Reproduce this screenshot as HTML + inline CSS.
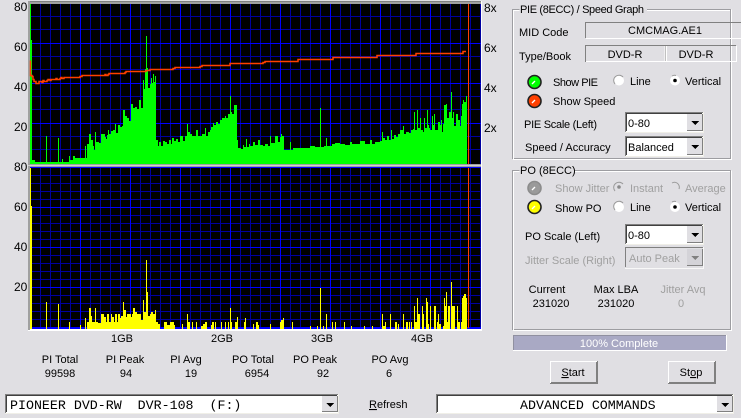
<!DOCTYPE html>
<html><head><meta charset="utf-8"><style>
html,body{margin:0;padding:0;width:741px;height:418px;overflow:hidden;background:#E0DFE3}
svg{display:block}
text{font-family:"Liberation Sans",sans-serif;font-size:11px;fill:#000}
.m{text-anchor:middle}
.g{fill:#a0a0a0}
.w{fill:#fff}
.c{font-family:"Liberation Mono",monospace;font-size:13.3px;white-space:pre}
.a{font-size:12px}
</style></head><body>
<svg width="741" height="418" viewBox="0 0 741 418" xmlns="http://www.w3.org/2000/svg">
<defs>
<pattern id="v" x="30" y="0" width="10" height="418" patternUnits="userSpaceOnUse"><rect x="0" width="1" height="418" fill="#0000a0"/></pattern>
</defs>
<rect width="741" height="418" fill="#E0DFE3"/>
<g shape-rendering="crispEdges">
<rect x="28" y="1" width="454" height="330" fill="#fff"/>
<rect x="28" y="1" width="453" height="3" fill="#a0a0a0"/>
<rect x="28" y="1" width="453" height="1" fill="#808080"/>
<rect x="28" y="1" width="2" height="329" fill="#a0a0a0"/>
<rect x="30" y="4" width="451" height="160" fill="#000"/>
<rect x="30" y="168" width="451" height="161" fill="#000"/>
<rect x="30" y="4" width="451" height="160" fill="url(#v)"/>
<rect x="30" y="168" width="451" height="161" fill="url(#v)"/>
<path fill="#0000a0" d="M30 16h451v1H30zM30 29h451v1H30zM30 56h451v1H30zM30 69h451v1H30zM30 96h451v1H30zM30 109h451v1H30zM30 136h451v1H30zM30 149h451v1H30zM30 175h451v1H30zM30 183h451v1H30zM30 191h451v1H30zM30 199h451v1H30zM30 215h451v1H30zM30 223h451v1H30zM30 231h451v1H30zM30 239h451v1H30zM30 255h451v1H30zM30 263h451v1H30zM30 271h451v1H30zM30 279h451v1H30zM30 295h451v1H30zM30 303h451v1H30zM30 311h451v1H30zM30 319h451v1H30z"/>
<path fill="#0000ff" d="M30 43h451v1H30zM30 83h451v1H30zM30 123h451v1H30zM30 207h451v1H30zM30 247h451v1H30zM30 287h451v1H30zM30 167h451v1H30zM30 327h451v2H30zM80 4h1v160h-1zM130 4h1v160h-1zM180 4h1v160h-1zM230 4h1v160h-1zM280 4h1v160h-1zM330 4h1v160h-1zM380 4h1v160h-1zM430 4h1v160h-1zM80 168h1v160h-1zM130 168h1v160h-1zM180 168h1v160h-1zM230 168h1v160h-1zM280 168h1v160h-1zM330 168h1v160h-1zM380 168h1v160h-1zM430 168h1v160h-1z"/>
<rect x="28" y="164" width="453" height="3" fill="#a0a0a0"/>
<rect x="28" y="165" width="453" height="1" fill="#d0d0d0"/>
<path fill="#00ff00" d="M30 164V4H31V40H32V160H35V162H46V136H47V162H58V138H59V162H62V159H63V162H69V156H70V160H73V156H75V158H85V146H86V158H87V144H89V134H91V140H93V146H94V150H95V132H96V142H99V143H101V134H105V137H106V139H107V135H108V130H109V134H111V131H113V130H115V124H116V133H118V125H120V127H122V126H123V110H125V116H127V118H129V121H131V104H133V108H135V107H137V109H139V100H141V108H143V80H144V89H145V69H146V36H147V68H148V88H150V84H151V78H152V83H153V74H154V82H155V76H156V140H158V146H159V142H161V146H163V141H165V142H167V144H169V140H171V144H172V138H174V141H176V139H178V142H180V136H183V141H185V136H187V124H188V132H190V134H192V136H196V130H198V136H202V134H205V128H206V136H208V132H210V130H211V127H213V123H214V125H216V122H218V124H220V120H222V118H225V116H226V118H228V114H230V96H231V112H232V114H234V105H237V140H238V148H241V149H243V145H244V147H246V139H247V147H249V144H250V146H253V142H255V145H258V140H260V145H263V146H265V144H268V146H270V136H271V143H275V136H278V142H280V137H281V134H282V136H284V150H290V142H291V150H293V148H310V146H315V147H320V108H321V147H324V146H326V138H327V146H332V144H335V143H340V144H345V145H350V142H352V144H360V141H365V144H370V140H372V144H375V142H380V141H382V132H383V138H385V140H387V136H389V140H391V130H392V139H394V135H396V137H398V134H400V130H403V126H404V134H406V132H409V133H411V130H413V129H414V112H415V130H417V110H418V128H420V118H421V130H423V132H424V118H425V128H427V110H428V125H429V128H430V130H432V116H433V125H434V114H435V130H438V122H440V125H441V120H442V132H443V124H444V105H446V104H447V118H449V112H451V92H452V118H453V112H454V126H456V114H458V120H460V126H461V116H462V104H463V100H464V102H466V96H467V164Z"/>
<path fill="#ffff00" d="M30 329V168H31V206H32V329H46V302H47V329H58V304H59V329H69V322H70V329H80V325H81V329H85V318H86V329H87V322H89V308H91V316H92V322H95V308H96V322H98V323H101V314H104V317H106V322H107V314H109V322H111V314H112V317H114V322H115V314H117V322H118V314H120V318H121V316H123V302H124V310H126V317H127V314H131V317H132V314H133V308H135V312H137V314H141V320H143V300H144V312H146V260H147V292H148V316H150V314H151V312H153V314H155V310H156V322H158V324H160V329H164V322H167V325H170V322H174V325H175V329H182V324H183V329H187V314H188V322H190V329H192V322H193V329H196V322H197V329H201V326H203V324H205V322H207V329H211V325H212V322H214V329H215V322H216V329H221V322H222V329H225V322H226V329H228V322H229V329H230V308H231V322H232V329H235V322H237V317H238V329H244V322H245V318H246V329H253V324H254V329H256V322H258V325H259V329H270V324H271V329H280V322H281V320H283V318H284V329H292V322H293V329H310V326H311V329H317V326H318V329H320V288H321V329H323V326H324V329H326V314H327V329H332V322H333V329H335V322H336V329H344V322H345V329H351V326H352V329H364V326H365V329H372V326H373V329H382V314H383V326H385V322H386V329H390V314H391V329H395V322H397V329H398V324H399V329H403V314H404V329H406V322H408V329H409V322H410V329H411V322H412V329H414V306H415V322H417V298H418V314H420V329H422V306H423V314H424V329H426V298H427V302H428V324H429V329H430V306H431V329H434V306H436V329H437V322H438V314H439V324H441V329H443V326H444V298H445V306H446V292H447V322H448V306H450V329H451V282H452V306H454V306H455V329H457V306H458V322H460V329H461V322H462V298H463V296H464V294H466V298H467V329Z"/>
<rect x="468" y="4" width="1" height="160" fill="#ff4000"/>
<rect x="468" y="168" width="1" height="160" fill="#ff4000"/>
<!-- group boxes -->
<path fill="none" stroke="#9d9da1" d="M519.5 9.5H512.5V158.5H730.5V9.5H647M519.5 170.5H512.5V329.5H730.5V170.5H574"/>
<path fill="none" stroke="#fff" d="M519.5 10.5H513.5V159.5H731.5V9.5M647 10.5H730M519.5 171.5H513.5V330.5H731.5V170.5M574 171.5H730"/>
<!-- MID -->
<path fill="none" stroke="#808080" d="M585.5 38V22.5H741"/>
<path fill="none" stroke="#fff" d="M586 38.5H741"/>
<path fill="none" stroke="#808080" d="M585.5 62V45.5H736M665.5 46V62"/>
<path fill="none" stroke="#fff" d="M586 61.5H736.5V46M665 61.5V46M666.5 46V61"/>
<!-- combos -->
<rect x="625" y="112" width="79" height="21" fill="#fff"/><path fill="none" stroke="#808080" d="M625.5 132V112.5H703"/><path fill="none" stroke="#404040" d="M626.5 131V113.5H702"/><path fill="none" stroke="#f0efe8" d="M625 132.5H703.5V112"/>
<rect x="687" y="114" width="16" height="17" fill="#E0DFE3"/><path fill="none" stroke="#808080" d="M687 130.5H702.5V114"/>
<rect x="625" y="136" width="79" height="21" fill="#fff"/><path fill="none" stroke="#808080" d="M625.5 156V136.5H703"/><path fill="none" stroke="#404040" d="M626.5 155V137.5H702"/><path fill="none" stroke="#f0efe8" d="M625 156.5H703.5V136"/>
<rect x="687" y="138" width="16" height="17" fill="#E0DFE3"/><path fill="none" stroke="#808080" d="M687 154.5H702.5V138"/>
<rect x="625" y="224" width="79" height="21" fill="#fff"/><path fill="none" stroke="#808080" d="M625.5 244V224.5H703"/><path fill="none" stroke="#404040" d="M626.5 243V225.5H702"/><path fill="none" stroke="#f0efe8" d="M625 244.5H703.5V224"/>
<rect x="687" y="226" width="16" height="17" fill="#E0DFE3"/><path fill="none" stroke="#808080" d="M687 242.5H702.5V226"/>
<path fill="none" stroke="#808080" d="M625.5 267V247.5H703"/><path fill="none" stroke="#f8f8f8" d="M625 268.5H703.5V247"/>
<rect x="687" y="249" width="16" height="17" fill="#d4d3d8"/><path fill="none" stroke="#808080" d="M687 265.5H702.5V249"/>
<path d="M691 121h8l-4 4zM691 145h8l-4 4zM691 233h8l-4 4z" fill="#000"/><path d="M691 256h8l-4 4z" fill="#808080"/>
<!-- progress -->
<rect x="513" y="335" width="214" height="16" fill="#fff"/><rect x="513" y="335" width="213" height="15" fill="#a9a9c4"/><path fill="none" stroke="#9090a0" d="M513.5 350V335.5H726"/>
<!-- buttons -->
<rect x="550" y="361" width="48" height="23" fill="#808080"/><rect x="550" y="361" width="47" height="22" fill="#fff"/><rect x="551" y="362" width="46" height="21" fill="#E0DFE3"/><path fill="none" stroke="#808080" d="M551 382.5H596.5V362"/>
<rect x="668" y="361" width="48" height="23" fill="#808080"/><rect x="668" y="361" width="47" height="22" fill="#fff"/><rect x="669" y="362" width="46" height="21" fill="#E0DFE3"/><path fill="none" stroke="#808080" d="M669 382.5H714.5V362"/>
<!-- bottom combos -->
<rect x="5" y="394" width="334" height="20" fill="#fff"/><path fill="none" stroke="#808080" d="M5.5 413V394.5H338"/><path fill="none" stroke="#404040" d="M6.5 412V395.5H337"/><path fill="none" stroke="#f0efe8" d="M5 413.5H338.5V394"/>
<rect x="322" y="396" width="16" height="16" fill="#E0DFE3"/><path fill="none" stroke="#808080" d="M322 411.5H337.5V396"/><path d="M326 403h8l-4 4z" fill="#000"/>
<rect x="436" y="394" width="298" height="20" fill="#fff"/><path fill="none" stroke="#808080" d="M436.5 413V394.5H733"/><path fill="none" stroke="#404040" d="M437.5 412V395.5H732"/><path fill="none" stroke="#f0efe8" d="M436 413.5H733.5V394"/>
<rect x="717" y="396" width="16" height="16" fill="#E0DFE3"/><path fill="none" stroke="#808080" d="M717 411.5H732.5V396"/><path d="M721 403h8l-4 4z" fill="#000"/>
</g>
<!-- speed line -->
<path transform="translate(0 .5)" fill="none" stroke="#ff4000" stroke-width="1.5" stroke-linejoin="miter" d="M30.5 60V75H32V76H33V79H34V81H36V83H39V81H42V82H43V80H44V81H47V80H48V79H50V80H51V79H56V78H57V79H60V78H61V77H62V78H64V77H80V76H82V75H105V74H106V75H108V74H109V73H125V72H126V71H146V70H150V69H173V68H175V67H200V66H202V65H230V63H263V62H265V61H298V59H333V57H377V55H416V53H463V51H466"/>
<!-- LEDs -->
<g stroke="#202020" stroke-width="1.6">
<circle cx="534.5" cy="82" r="6.5" fill="#00ff00"/>
<circle cx="534.5" cy="101" r="6.5" fill="#ff4000"/>
<circle cx="534.5" cy="188" r="6.5" fill="#9a9a9a" stroke="#8c8c8c"/>
<circle cx="534.5" cy="207" r="6.5" fill="#ffff00"/>
</g>
<path d="M532 84l3-3M532 103l3-3M532 190l3-3M532 209l3-3" stroke="#fff" stroke-width="1.4"/>
<!-- radios -->
<g fill="#fff">
<circle cx="619" cy="80.5" r="5"/><circle cx="675" cy="80.5" r="5"/>
<circle cx="619" cy="207" r="5"/><circle cx="675" cy="207" r="5"/>
</g>
<g fill="none" stroke="#9a9a9a">
<path d="M615 84a5 5 0 0 1 8-7M672 76a5 5 0 0 1 4-.5M615 210a5 5 0 0 1 8-7M672 202a5 5 0 0 1 4-.5M615 191a5 5 0 0 1 8-7M672 183a5 5 0 0 1 5 0 5 5 0 0 1 2 6"/>
</g>
<circle cx="675" cy="80.5" r="1.8"/><circle cx="675" cy="207" r="1.8"/><circle cx="619" cy="187" r="1.8" fill="#8a8a8a"/>
<!-- axis -->
<text class="a" x="14" y="11">80</text><text class="a" x="14" y="51">60</text><text class="a" x="14" y="91">40</text><text class="a" x="14" y="131">20</text>
<text class="a" x="14" y="171">80</text><text class="a" x="14" y="211">60</text><text class="a" x="14" y="251">40</text><text class="a" x="14" y="291">20</text>
<text class="a" x="484" y="12">8x</text><text class="a" x="484" y="52">6x</text><text class="a" x="484" y="92">4x</text><text class="a" x="484" y="132">2x</text>
<text class="m" x="122" y="342">1GB</text><text class="m" x="222" y="342">2GB</text><text class="m" x="322" y="342">3GB</text><text class="m" x="422" y="342">4GB</text>
<text class="m" x="60" y="363">PI Total</text><text class="m" x="125" y="363">PI Peak</text><text class="m" x="186" y="363">PI Avg</text><text class="m" x="253" y="363">PO Total</text><text class="m" x="315" y="363">PO Peak</text><text class="m" x="390" y="363">PO Avg</text>
<text class="m" x="60" y="377">99598</text><text class="m" x="126" y="377">94</text><text class="m" x="191" y="377">19</text><text class="m" x="257" y="377">6954</text><text class="m" x="323" y="377">92</text><text class="m" x="389" y="377">6</text>
<text class="c" x="10" y="409">PIONEER DVD-RW  DVR-108  (F:)</text>
<text x="369" y="408"><tspan text-decoration="underline">R</tspan>efresh</text>
<text class="c" x="520" y="409">ADVANCED COMMANDS</text>
<!-- panel -->
<text x="520" y="13" textLength="124">PIE (8ECC) / Speed Graph</text>
<text x="519" y="36">MID Code</text><text class="m" x="665" y="34">CMCMAG.AE1</text>
<text x="519" y="60">Type/Book</text><text class="m" x="625" y="58">DVD-R</text><text class="m" x="696" y="58">DVD-R</text>
<text x="553" y="86" textLength="45">Show PIE</text><text x="630" y="85">Line</text><text x="685" y="85">Vertical</text>
<text x="553" y="105">Show Speed</text>
<text x="524" y="128" textLength="73">PIE Scale (Left)</text><text x="628" y="127">0-80</text>
<text x="525" y="151">Speed / Accuracy</text><text x="628" y="151">Balanced</text>
<text x="520" y="174">PO (8ECC)</text>
<text class="g" x="555" y="192">Show Jitter</text><text class="g" x="630" y="192">Instant</text><text class="g" x="685" y="192">Average</text>
<text x="555" y="212">Show PO</text><text x="630" y="211">Line</text><text x="685" y="211">Vertical</text>
<text x="525" y="240">PO Scale (Left)</text><text x="628" y="239">0-80</text>
<text class="g" x="525" y="264">Jitter Scale (Right)</text><text class="g" x="629" y="262">Auto Peak</text>
<text class="m" x="547" y="293">Current</text><text class="m" x="616" y="293">Max LBA</text><text class="m g" x="683" y="293">Jitter Avq</text>
<text class="m" x="551" y="307">231020</text><text class="m" x="616" y="307">231020</text><text class="m g" x="681" y="307">0</text>
<text class="m w" x="619" y="347">100% Complete</text>
<text class="m" x="573" y="376"><tspan text-decoration="underline">S</tspan>tart</text>
<text class="m" x="691" y="376">St<tspan text-decoration="underline">o</tspan>p</text>
</svg>
</body></html>
